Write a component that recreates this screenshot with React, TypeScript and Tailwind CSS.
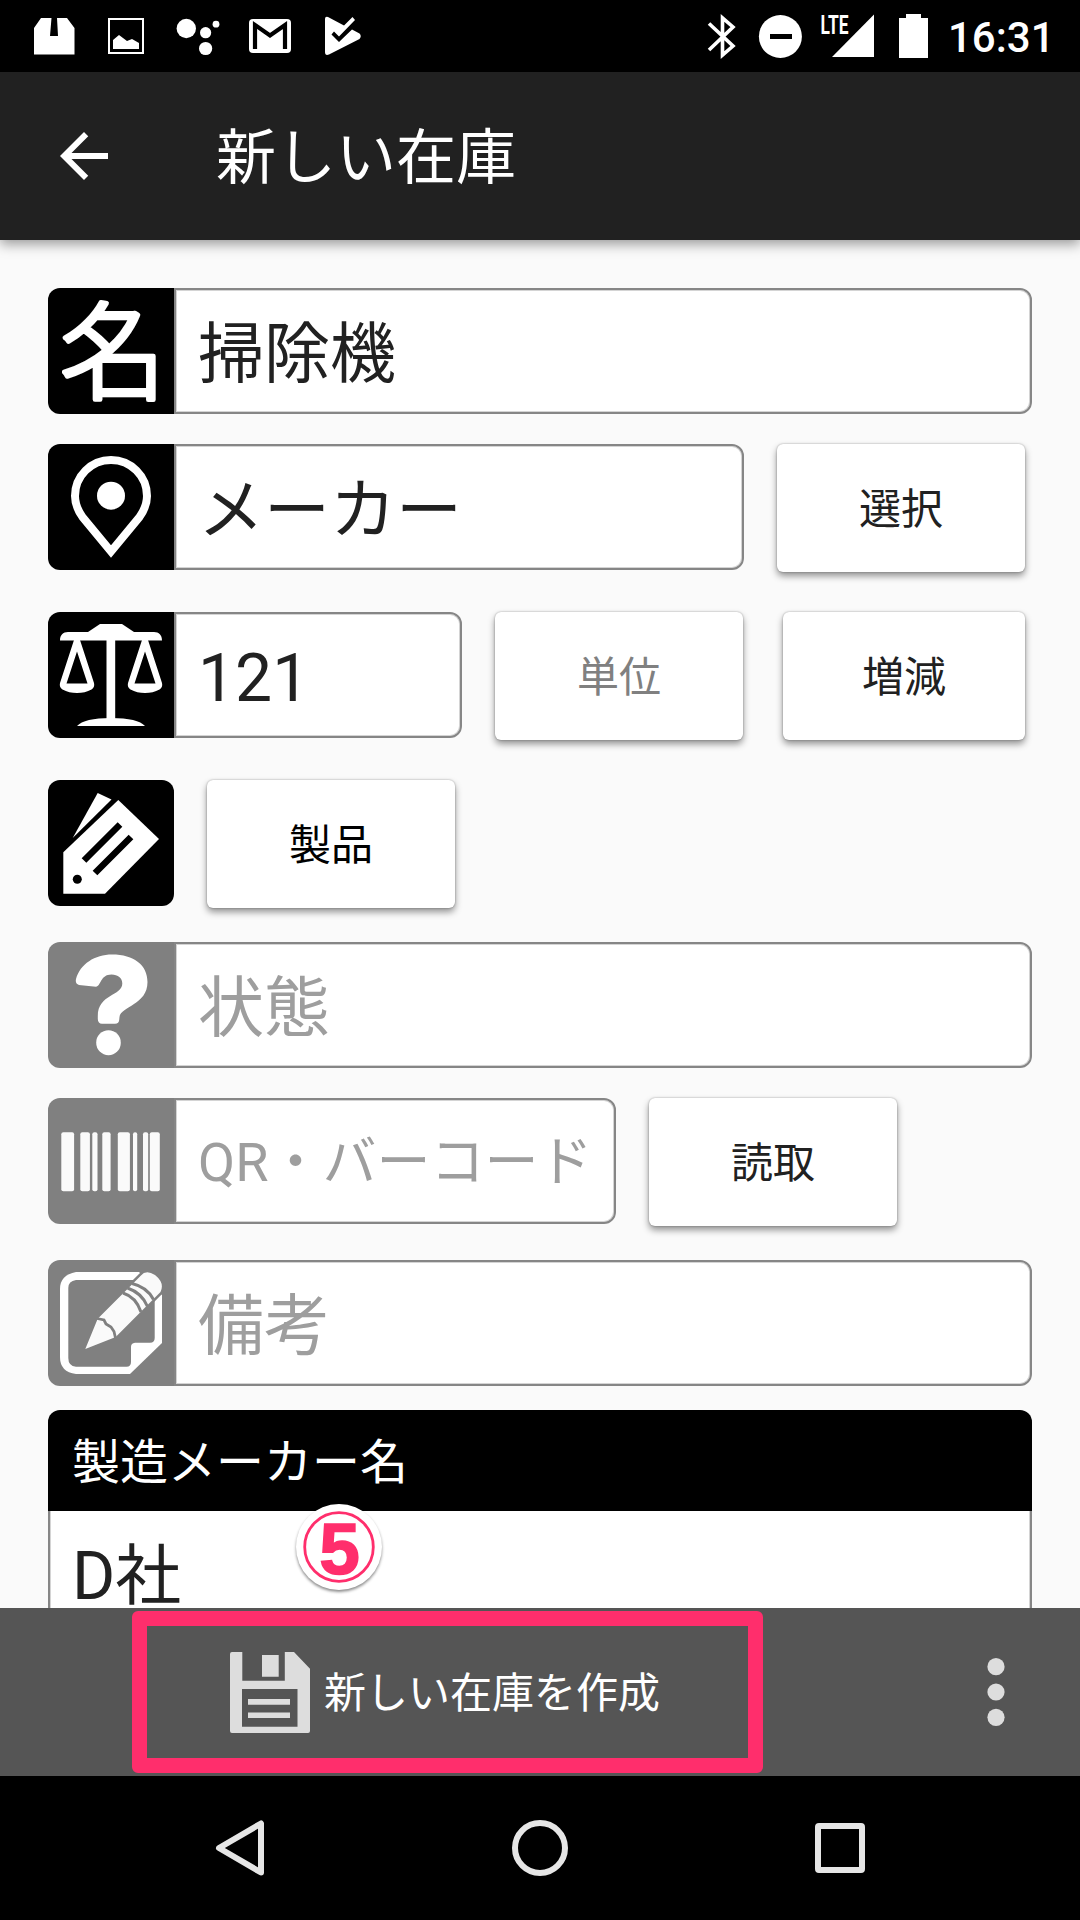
import type { ReactNode } from "react";

function StatusBar() {
  return (
    <div className="flex h-[72px] items-center justify-between bg-black text-white">
      <svg width="380" height="72" viewBox="0 0 380 72" fill="#fff">
        <path d="M41 18H51.500L50 36H58L57 18H67L74.500 28V54.500H34V28Z" />
        <rect x="109" y="19" width="34" height="34" fill="none" stroke="#fff" strokeWidth="2" />
        <path d="M113 40l6-5 8 6 5-2 7 4v6H113Z" />
        <circle cx="186.300" cy="28.500" r="9.700" />
        <circle cx="205.600" cy="32.700" r="5.600" />
        <circle cx="216" cy="24.200" r="3.400" />
        <circle cx="205.600" cy="48.500" r="6.600" />
        <rect x="249" y="19" width="42" height="34" rx="4" />
        <path d="M255 49V25L270 35.500L285 25V49" fill="none" stroke="#000" strokeWidth="4.200" />
        <path d="M325 19q0-3 3-2L344 25.500L352.500 17L355 20L339 36.500L334 31.500L331.500 34.500L339 42L352 29.500L359.500 33.500Q362 36 359.500 39L329 54.500Q325 56 325 52Z" />
      </svg>
      <div className="flex items-center">
        <svg width="240" height="72" viewBox="700 0 240 72" fill="#fff">
          <path d="M709 23.500L733 46L722.500 55V18L733 27L709 50" fill="none" stroke="#fff" strokeWidth="3.600" />
          <circle cx="780.400" cy="36.500" r="21.500" />
          <rect x="770" y="34" width="22" height="5" fill="#000" />
          <text x="820.500" y="34" fontFamily="Roboto" fontWeight="700" fontSize="25" textLength="28" lengthAdjust="spacingAndGlyphs">LTE</text>
          <path d="M832 57L874 14.500V57Z" />
          <path d="M899 18H906V14H921V18H928V58H899Z" />
        </svg>
        <span className="w-[140px] pt-1 pl-2 font-[Roboto] text-[42px] leading-[72px] font-medium">16:31</span>
      </div>
    </div>
  );
}

function AppBar() {
  return (
    <header className="relative z-10 flex h-[168px] items-center bg-[#212121] pl-12 text-white shadow-[0_4px_12px_rgba(0,0,0,0.4)]">
      <svg width="72" height="72" viewBox="0 0 24 24" fill="#fff">
        <path d="M20 11H7.830l5.590-5.590L12 4l-8 8 8 8 1.410-1.410L7.830 13H20v-2z" />
      </svg>
      <h1 className="ml-24 pt-[5px] text-[60px] leading-[88px]">新しい在庫</h1>
    </header>
  );
}

function NameIcon() {
  return (
    <svg width="126" height="126" viewBox="0 0 126 126">
      <text x="12" y="103" fontFamily="Noto Sans CJK JP" fontWeight="300" fontSize="106" textLength="106" lengthAdjust="spacingAndGlyphs" fill="#fff" stroke="#fff" strokeWidth="4.500" strokeLinejoin="round">名</text>
    </svg>
  );
}

function PinIcon() {
  return (
    <svg width="126" height="126" viewBox="0 0 126 126">
      <path d="M63 107.500L34.500 73C29.500 66 27 60 27 52a36 36 0 0 1 72 0C99 60 96.500 66 91.500 73Z" fill="none" stroke="#fff" strokeWidth="8" />
      <circle cx="63" cy="51.700" r="14" fill="#fff" />
    </svg>
  );
}

function Pan({ cx }: { cx: number }) {
  return (
    <g transform={`translate(${cx} 0)`}>
      <path
        fillRule="evenodd"
        d="M-3 28H3L17 71Q18 75 14.500 77.500Q8 81 0 81Q-8 81-14.500 77.500Q-18 75-17 71ZM0 39.500L-10.500 71.500H10.500Z"
      />
    </g>
  );
}

function ScaleIcon() {
  return (
    <svg width="126" height="126" viewBox="0 0 126 126" fill="#fff">
      <path d="M12 28.500C12 23 15 20 20 20H40L52 12H74L86 20H106C111 20 114 23 114 28.500Z" />
      <rect x="58.500" y="20" width="8.700" height="88" />
      <path d="M29 114Q36 106 63 106Q90 106 97 114Z" />
      <Pan cx={29} />
      <Pan cx={97} />
    </svg>
  );
}

function TagIcon() {
  return (
    <svg width="126" height="126" viewBox="0 0 126 126" fill="#fff">
      <path d="M49.700 13L63.500 19.500L24.700 58Z" />
      <path d="M70.300 20L111 59L57 113.700H15.300V72.300Z" />
      <path d="M72 44.500L36 80.500M83 57L47 93" stroke="#000" strokeWidth="6.600" />
      <circle cx="29.300" cy="99.300" r="4.500" fill="#000" />
    </svg>
  );
}

function QuestionIcon() {
  return (
    <svg width="126" height="126" viewBox="0 0 126 126" fill="#fff">
      <path d="M28 37C32 22 47 12.500 64 12.500C86 12.500 99.500 23 99.500 40C99.500 63 73 64 71.500 75L71.200 78Q71 81.700 67 81.700H54Q50 81.700 49.800 77V74C49.800 52 74.300 54 74.300 41.500C74.300 36 70 32.500 63.500 32.500C52 32.500 53 44.500 48 44.700L31 43Q27 42 28 37Z" />
      <ellipse cx="60.500" cy="100.700" rx="12.300" ry="12.500" />
    </svg>
  );
}

const bars = [
  [13.3, 12.8],
  [32.3, 9.6],
  [44.3, 5.2],
  [54.3, 8.3],
  [69.8, 12.1],
  [85, 4.2],
  [95, 5.2],
  [101.8, 10],
];

function BarcodeIcon() {
  return (
    <svg width="126" height="126" viewBox="0 0 126 126" fill="#fafafa">
      {bars.map(([x, w]) => (
        <rect key={x} x={x} y="34.300" width={w} height="59" rx="2" />
      ))}
    </svg>
  );
}

function NoteIcon() {
  return (
    <svg width="126" height="126" viewBox="0 0 126 126" fill="none">
      <path d="M28 12H91L114 35V83L82 114H28Q12 112 12 97V29Q12 15 28 12Z" fill="#fff" />
      <path d="M28 20H106.700V78Q106.700 82.700 102 82.700H87Q83 83 83 87V102Q83 106.700 78.500 106.700H28Q20.300 106 20.300 98V28Q20.300 21 28 20Z" fill="#808080" />
      <path d="M37.300 89L49.700 58.700L93 15.500Q98 9.500 107 15Q117 23 112.500 32L67.700 77Z" fill="#fafafa" stroke="#808080" strokeWidth="5" paintOrder="stroke" />
      <path d="M49 58.500L56 60L58 64L63 67L66 71.500L67.500 78" stroke="#808080" strokeWidth="2.800" />
      <path d="M75 33Q88 37 93 52M79.500 28Q94 33 99.500 46.500M84 23.500Q99 27 105.500 39.500" stroke="#808080" strokeWidth="3" />
    </svg>
  );
}

function IconTile({ children, tone = "bg-black", shape = "rounded-l-xl" }: { children: ReactNode; tone?: string; shape?: string }) {
  return <div className={`size-[126px] shrink-0 overflow-hidden ${shape} ${tone}`}>{children}</div>;
}

function Field({ children, width, muted = false, size = "text-[66px] pt-2" }: { children: ReactNode; width: string; muted?: boolean; size?: string }) {
  return (
    <div
      className={`flex h-[126px] items-center overflow-hidden rounded-r-xl border-2 border-[#868686] bg-white pl-[22px] whitespace-nowrap shadow-[inset_0_0_0_1px_#d4d4d4] ${width} ${size} ${muted ? "text-[#9e9e9e]" : "text-[#212121]"}`}
    >
      <span className="leading-[98px]">{children}</span>
    </div>
  );
}

function RaisedButton({ children, className }: { children: ReactNode; className: string }) {
  return (
    <button
      className={`flex h-32 items-center justify-center rounded-md bg-white pt-[3px] text-[42px] leading-[62px] shadow-[0_0_2px_rgba(0,0,0,0.35),0_4px_7px_rgba(0,0,0,0.42)] ${className}`}
    >
      {children}
    </button>
  );
}

function Form() {
  return (
    <main className="flex h-[1368px] flex-col overflow-hidden bg-[#fafafa] px-12 pt-12">
      <div className="flex h-[126px]">
        <IconTile><NameIcon /></IconTile>
        <Field width="w-[858px]">掃除機</Field>
      </div>
      <div className="mt-[30px] flex h-[126px]">
        <IconTile><PinIcon /></IconTile>
        <Field width="w-[570px]">メーカー</Field>
        <RaisedButton className="ml-[33px] w-[248px] text-[#212121]">選択</RaisedButton>
      </div>
      <div className="mt-[42px] flex h-[126px]">
        <IconTile><ScaleIcon /></IconTile>
        <Field width="w-72">121</Field>
        <RaisedButton className="ml-[33px] w-[248px] text-[#808080]">単位</RaisedButton>
        <RaisedButton className="ml-10 w-[242px] text-[#212121]">増減</RaisedButton>
      </div>
      <div className="mt-[42px] flex h-[126px]">
        <IconTile shape="rounded-xl"><TagIcon /></IconTile>
        <RaisedButton className="ml-[33px] w-[248px] text-black">製品</RaisedButton>
      </div>
      <div className="mt-9 flex h-[126px]">
        <IconTile tone="bg-[#808080]"><QuestionIcon /></IconTile>
        <Field width="w-[858px]" muted>状態</Field>
      </div>
      <div className="mt-[30px] flex h-[126px]">
        <IconTile tone="bg-[#808080]"><BarcodeIcon /></IconTile>
        <Field width="w-[442px]" size="text-[54px] pt-1" muted>QR・バーコード</Field>
        <RaisedButton className="ml-[33px] w-[248px] text-[#212121]">読取</RaisedButton>
      </div>
      <div className="mt-9 flex h-[126px]">
        <IconTile tone="bg-[#808080]"><NoteIcon /></IconTile>
        <Field width="w-[858px]" muted>備考</Field>
      </div>
      <section className="mt-6 w-[984px] shrink-0">
        <h2 className="h-[101px] rounded-t-xl bg-black pt-0.5 pl-6 text-[48px] leading-[101px] text-white">製造メーカー名</h2>
        <div className="relative h-[97px] border-x-2 border-[#868686] bg-white pl-[22px] text-[66px] text-[#212121] shadow-[inset_1px_0_0_#d4d4d4,inset_-1px_0_0_#d4d4d4]">
          <p className="pt-[19px] leading-[94px]">D社</p>
          <div className="absolute top-[-7px] left-[246px] flex size-[86px] items-center justify-center rounded-full bg-white shadow-[0_2px_3px_rgba(0,0,0,0.45)]">
            <svg width="86" height="86" viewBox="0 0 86 86">
              <circle cx="43" cy="43" r="34.300" fill="none" stroke="#ff2e6c" strokeWidth="2.800" />
              <text x="43.500" y="69.500" textAnchor="middle" fontFamily="Liberation Sans" fontWeight="700" fontSize="73" fill="#ff2e6c" stroke="#ff2e6c" strokeWidth="1.500">5</text>
            </svg>
          </div>
        </div>
      </section>
    </main>
  );
}

function ActionBar() {
  return (
    <div className="flex h-[168px] items-center bg-[#555] pl-[132px]">
      <button className="flex h-[162px] w-[631px] items-center rounded-md border-[15px] border-[#ff2e6c] pl-[83px] text-[42px] text-white">
        <svg width="80" height="81" viewBox="0 0 80 81" fill="#ddd">
          <path
            fillRule="evenodd"
            d="M2 0H12.300V28.800H54.800V0H64L80 16.700V79Q80 81 78 81H2Q0 81 0 79V2Q0 0 2 0ZM12 37V74.700H67.500V37Z"
          />
          <path d="M32 3H48.700V24.700H32ZM18 47H60V52.700H18ZM18 60.500H60V66H18Z" />
        </svg>
        <span className="ml-3.5 pt-1 leading-[62px]">新しい在庫を作成</span>
      </button>
      <svg className="ml-[215px]" width="36" height="72" viewBox="0 0 36 72" fill="#ddd">
        <circle cx="18" cy="10.700" r="8.600" />
        <circle cx="18" cy="36" r="8.600" />
        <circle cx="18" cy="61.300" r="8.600" />
      </svg>
    </div>
  );
}

function NavBar() {
  return (
    <nav className="grid h-36 grid-cols-[480px_120px_480px] items-center bg-black">
      <svg className="ml-[204px]" width="72" height="72" viewBox="0 0 72 72" fill="none" stroke="#e6e6e6" strokeWidth="6" strokeLinejoin="round">
        <path d="M15 36L57 11.500V60.500Z" />
      </svg>
      <svg className="ml-6" width="72" height="72" viewBox="0 0 72 72" fill="none" stroke="#e6e6e6" strokeWidth="6">
        <circle cx="36" cy="36" r="25" />
      </svg>
      <svg className="ml-[204px]" width="72" height="72" viewBox="0 0 72 72" fill="none" stroke="#e6e6e6" strokeWidth="6" strokeLinejoin="round">
        <rect x="14" y="14" width="44" height="44" rx="1" />
      </svg>
    </nav>
  );
}

export default function App() {
  return (
    <div lang="ja" className="h-[1920px] w-[1080px] overflow-hidden font-['Roboto','Noto_Sans_CJK_JP',sans-serif]">
      <StatusBar />
      <AppBar />
      <Form />
      <ActionBar />
      <NavBar />
    </div>
  );
}
